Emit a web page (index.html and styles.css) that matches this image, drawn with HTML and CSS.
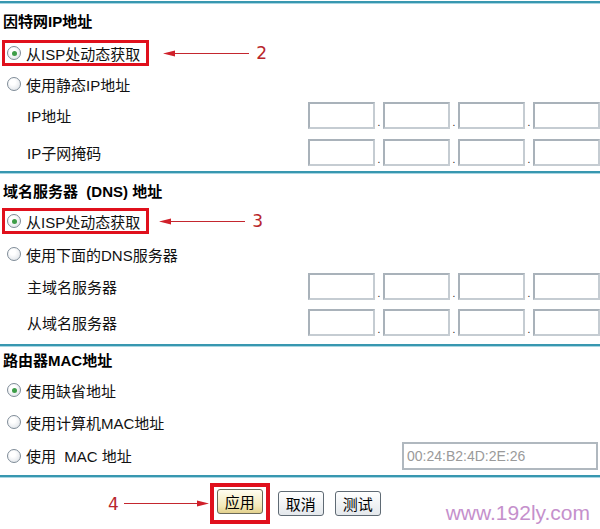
FILE: index.html
```html
<!DOCTYPE html>
<html lang="zh">
<head>
    <meta charset="UTF-8">
    <title>WAN设置</title>
    <link rel="stylesheet" href="styles.css">
</head>
<body>
    <div class="page">
        <div class="rule"></div>

        <div class="row head h32">因特网IP地址</div>
        <div class="row h34">
            <label class="mark"><span class="radio on"></span>从ISP处动态获取</label>
            <svg class="arrow" width="86" height="9" viewBox="0 0 86 9"><line x1="8" y1="4.5" x2="86" y2="4.5" stroke="#c4262e" stroke-width="1.2"/><polygon points="0,4.5 12,1.5 12,7.5" fill="#d0202a"/></svg>
            <span class="num">2</span>
        </div>
        <div class="row h28 pad"><span class="radio"></span>使用静态IP地址</div>
        <div class="row h35 pad">
            <span class="name">IP地址</span>
            <div class="ip">
                <input type="text"><span class="dot">.</span><input type="text"><span class="dot">.</span><input type="text"><span class="dot">.</span><input type="text">
            </div>
        </div>
        <div class="row h38 pad">
            <span class="name">IP子网掩码</span>
            <div class="ip">
                <input type="text"><span class="dot">.</span><input type="text"><span class="dot">.</span><input type="text"><span class="dot">.</span><input type="text">
            </div>
        </div>

        <div class="rule"></div>

        <div class="row head h32">域名服务器&nbsp;&nbsp;(DNS) 地址</div>
        <div class="row h30">
            <label class="mark"><span class="radio on"></span>从ISP处动态获取</label>
            <svg class="arrow a3" width="86" height="9" viewBox="0 0 86 9"><line x1="8" y1="4.5" x2="86" y2="4.5" stroke="#c4262e" stroke-width="1.2"/><polygon points="0,4.5 12,1.5 12,7.5" fill="#d0202a"/></svg>
            <span class="num">3</span>
        </div>
        <div class="row h36 pad"><span class="radio"></span>使用下面的DNS服务器</div>
        <div class="row h28 pad">
            <span class="name">主域名服务器</span>
            <div class="ip">
                <input type="text"><span class="dot">.</span><input type="text"><span class="dot">.</span><input type="text"><span class="dot">.</span><input type="text">
            </div>
        </div>
        <div class="row h44 pad">
            <span class="name">从域名服务器</span>
            <div class="ip">
                <input type="text"><span class="dot">.</span><input type="text"><span class="dot">.</span><input type="text"><span class="dot">.</span><input type="text">
            </div>
        </div>

        <div class="rule"></div>

        <div class="row head h25">路由器MAC地址</div>
        <div class="row h36 pad"><span class="radio on"></span>使用缺省地址</div>
        <div class="row h28 pad"><span class="radio"></span>使用计算机MAC地址</div>
        <div class="row h39 pad">
            <span class="radio"></span>使用&nbsp;&nbsp;MAC 地址
            <input type="text" class="mac" value="00:24:B2:4D:2E:26">
        </div>

        <div class="rule"></div>

        <div class="buttons">
            <span class="num">4</span>
            <svg class="arrow a4" width="85" height="9" viewBox="0 0 85 9"><line x1="0" y1="4.5" x2="76" y2="4.5" stroke="#c4262e" stroke-width="1.2"/><polygon points="85,4.5 73,1.5 73,7.5" fill="#d0202a"/></svg>
            <span class="box"><button class="active">应用</button></span>
            <button class="cancel">取消</button>
            <button class="test">测试</button>
        </div>

        <div class="site">www.192ly.com</div>
    </div>
</body>
</html>
```

FILE: styles.css
```css
body {
    margin: 0;
    background-color: #fff;
    font-family: "Liberation Sans", "Noto Sans CJK SC", sans-serif;
    font-size: 15px;
    color: #111;
}

.page {
    position: relative;
    width: 600px;
    height: 529px;
    overflow: hidden;
    padding-top: 1px;
    box-sizing: border-box;
}

.rule {
    height: 2px;
    background-color: #3897b0;
    border-bottom: 1px solid #a9d6e2;
}

.row {
    display: flex;
    align-items: center;
    box-sizing: border-box;
    white-space: nowrap;
}

.pad {
    padding-left: 7px;
}

.h25 { height: 25px; }
.h28 { height: 28px; }
.h30 { height: 30px; }
.h32 { height: 32px; }
.h34 { height: 34px; }
.h35 { height: 35px; }
.h36 { height: 36px; }
.h38 { height: 38px; }
.h39 { height: 39px; }
.h44 { height: 44px; }

.head {
    font-weight: bold;
    padding-left: 3px;
    color: #000;
}

.name {
    padding-left: 20px;
}

/* radio buttons */
.radio {
    display: inline-block;
    position: relative;
    width: 12px;
    height: 12px;
    border: 1px solid #7f8c98;
    border-radius: 50%;
    background: radial-gradient(circle at 40% 35%, #ffffff 25%, #d8dde3 100%);
    margin-right: 5px;
    flex-shrink: 0;
}

.radio.on::after {
    content: "";
    position: absolute;
    left: 3.5px;
    top: 3.5px;
    width: 5px;
    height: 5px;
    border-radius: 50%;
    background: #3e9d48;
}

/* red marks */
.mark {
    display: flex;
    align-items: center;
    height: 26px;
    box-sizing: border-box;
    border: 3px solid #e0101c;
    margin-left: 2px;
    padding: 0 6px 0 2px;
}

.arrow {
    margin-left: 14px;
}

.arrow.a3 {
    margin-left: 10px;
}

.num {
    margin-left: 7px;
    color: #b8262c;
    font-size: 17px;
    font-family: "DejaVu Sans", sans-serif;
}

/* ip fields */
.ip {
    display: flex;
    margin-left: auto;
}

.ip input {
    width: 67px;
    height: 27px;
    box-sizing: border-box;
    border: 2px solid #a9b2ba;
    border-right-color: #c5ccd2;
    border-bottom-color: #c5ccd2;
    background: #fff;
    margin: 0;
    padding: 0;
}

.dot {
    width: 8px;
    text-align: center;
    align-self: flex-end;
    font-size: 10px;
    line-height: 12px;
}

.mac {
    margin-left: auto;
    margin-right: 2px;
    width: 196px;
    height: 28px;
    box-sizing: border-box;
    border: 2px solid #b0b8bf;
    padding: 0 3px;
    font-family: "Liberation Sans", sans-serif;
    font-size: 14px;
    color: #9a9a9a;
}

/* buttons */
.buttons {
    display: flex;
    align-items: center;
    padding-left: 108px;
    padding-top: 5px;
}

.buttons .num {
    margin-left: 0;
}

.arrow.a4 {
    margin-left: 5px;
}

.box {
    display: flex;
    margin-left: 1px;
    border: 4px solid #e0101c;
    padding: 2px 3px 6px 3px;
}

button {
    width: 46px;
    height: 25px;
    padding: 0;
    font-family: "Liberation Sans", "Noto Sans CJK SC", sans-serif;
    font-size: 15px;
    color: #000;
    border: 1px solid #5f6a74;
    border-radius: 3px;
    background: linear-gradient(#ffffff, #e4e8ec);
    cursor: pointer;
}

button.active {
    background: linear-gradient(#fffdf0, #f3e9b8 70%, #e2d08c);
    border-color: #6b6a58;
}

.cancel {
    margin-left: 8px;
}

.test {
    margin-left: 11px;
}

.site {
    position: absolute;
    right: 10px;
    bottom: 4px;
    font-family: "Liberation Sans", sans-serif;
    font-size: 21px;
    color: #c590cc;
}
```
